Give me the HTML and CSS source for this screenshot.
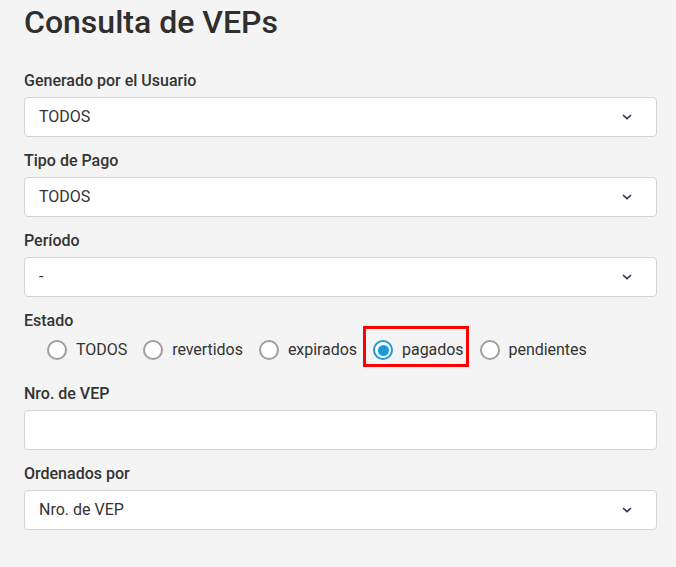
FILE: index.html
```html
<!DOCTYPE html>
<html lang="es">
<head>
<meta charset="utf-8">
<title>Consulta de VEPs</title>
<link rel="stylesheet" href="styles.css">
</head>
<body>
<main class="page">
  <h1 class="title">Consulta de VEPs</h1>

  <div class="field">
    <div class="label">Generado por el Usuario</div>
    <div class="select"><span>TODOS</span><svg class="chev" width="10" height="6" viewBox="0 0 10 6"><path d="M1 1 L5 4.6 L9 1" fill="none" stroke="#3d2b4f" stroke-width="1.6"/></svg></div>
  </div>

  <div class="field">
    <div class="label">Tipo de Pago</div>
    <div class="select"><span>TODOS</span><svg class="chev" width="10" height="6" viewBox="0 0 10 6"><path d="M1 1 L5 4.6 L9 1" fill="none" stroke="#3d2b4f" stroke-width="1.6"/></svg></div>
  </div>

  <div class="field">
    <div class="label">Período</div>
    <div class="select"><span>-</span><svg class="chev" width="10" height="6" viewBox="0 0 10 6"><path d="M1 1 L5 4.6 L9 1" fill="none" stroke="#3d2b4f" stroke-width="1.6"/></svg></div>
  </div>

  <div class="field estado">
    <div class="label">Estado</div>
    <div class="radios">
      <div class="radio"><span class="circle"></span>TODOS</div>
      <div class="radio"><span class="circle"></span>revertidos</div>
      <div class="radio"><span class="circle"></span>expirados</div>
      <div class="radio checked highlight"><span class="circle"></span>pagados</div>
      <div class="radio"><span class="circle"></span>pendientes</div>
    </div>
  </div>

  <div class="field">
    <div class="label">Nro. de VEP</div>
    <div class="select input"></div>
  </div>

  <div class="field">
    <div class="label">Ordenados por</div>
    <div class="select"><span>Nro. de VEP</span><svg class="chev" width="10" height="6" viewBox="0 0 10 6"><path d="M1 1 L5 4.6 L9 1" fill="none" stroke="#3d2b4f" stroke-width="1.6"/></svg></div>
  </div>
</main>
</body>
</html>
```

FILE: styles.css
```css
html, body {
  margin: 0;
  padding: 0;
  background: #f4f4f4;
}
body {
  font-family: Roboto, "Noto Sans", "Liberation Sans", sans-serif;
  color: #333333;
}
.page {
  padding: 3px 19px 0 24px;
}
.title {
  margin: 0 0 28px 0;
  font-size: 32px;
  line-height: 38px;
  font-weight: 500;
  color: #2f2f2f;
}
.field {
  margin-bottom: 12px;
}
.label {
  font-size: 16px;
  line-height: 24px;
  font-weight: 500;
  color: #333333;
  margin-bottom: 4px;
}
.select {
  box-sizing: border-box;
  height: 40px;
  background: #ffffff;
  border: 1px solid #d3d3d8;
  border-radius: 4px;
  padding: 0 24px 0 14px;
  display: flex;
  align-items: center;
  justify-content: space-between;
  font-size: 16px;
  line-height: 20px;
  color: #333333;
}
.select span {
  position: relative;
  top: -0.5px;
}
.chev {
  display: block;
}
.estado {
  margin-bottom: 19px;
}
.radios {
  display: flex;
  align-items: center;
  gap: 16px;
  padding-left: 23px;
  height: 26px;
}
.radio {
  position: relative;
  display: flex;
  align-items: center;
  font-size: 16px;
  line-height: 24px;
  letter-spacing: -0.04px;
  color: #333333;
}
.circle {
  box-sizing: border-box;
  width: 20px;
  height: 20px;
  border-radius: 50%;
  border: 2px solid #9e9e9e;
  background: #ffffff;
  margin-right: 9px;
  display: flex;
  align-items: center;
  justify-content: center;
}
.checked .circle {
  border-color: #1b9ad9;
}
.checked .circle::after {
  content: "";
  width: 11px;
  height: 11px;
  border-radius: 50%;
  background: #1b9ad9;
}
.highlight::before {
  content: "";
  position: absolute;
  left: -10px;
  right: -5px;
  top: -12px;
  bottom: -5px;
  border: 3px solid #ff0000;
}
```
